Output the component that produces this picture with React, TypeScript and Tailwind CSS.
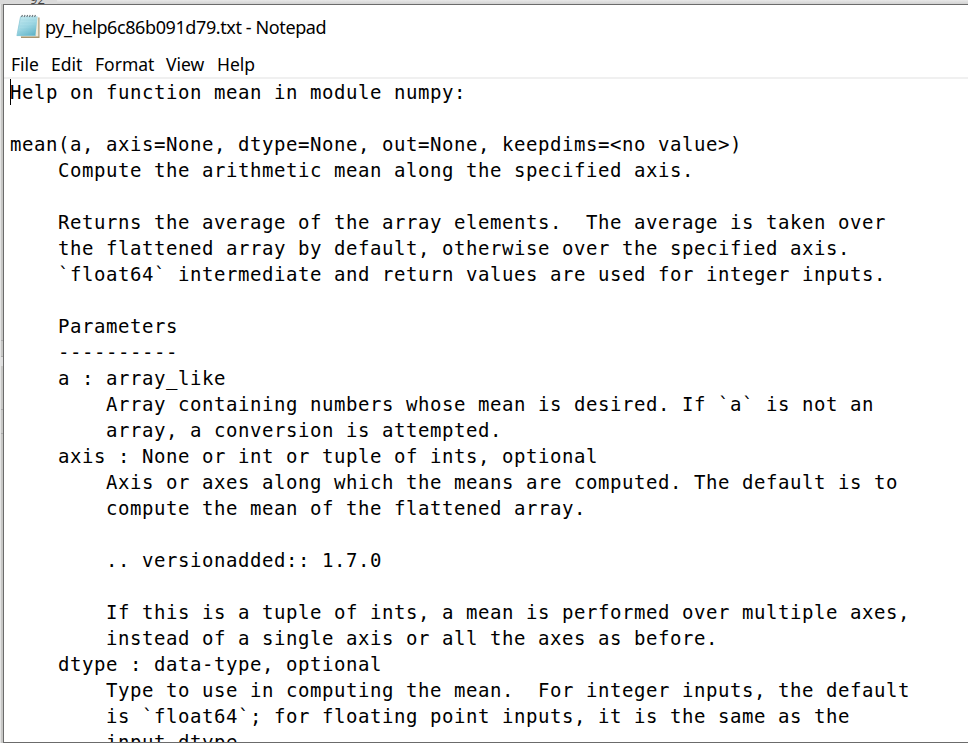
const lines = [
  'Help on function mean in module numpy:',
  '',
  'mean(a, axis=None, dtype=None, out=None, keepdims=<no value>)',
  '    Compute the arithmetic mean along the specified axis.',
  '',
  '    Returns the average of the array elements.  The average is taken over',
  '    the flattened array by default, otherwise over the specified axis.',
  '    `float64` intermediate and return values are used for integer inputs.',
  '',
  '    Parameters',
  '    ----------',
  '    a : array_like',
  '        Array containing numbers whose mean is desired. If `a` is not an',
  '        array, a conversion is attempted.',
  '    axis : None or int or tuple of ints, optional',
  '        Axis or axes along which the means are computed. The default is to',
  '        compute the mean of the flattened array.',
  '',
  '        .. versionadded:: 1.7.0',
  '',
  '        If this is a tuple of ints, a mean is performed over multiple axes,',
  '        instead of a single axis or all the axes as before.',
  '    dtype : data-type, optional',
  '        Type to use in computing the mean.  For integer inputs, the default',
  '        is `float64`; for floating point inputs, it is the same as the',
  '        input dtype.',
];

const menus = [
  { label: 'File', width: 'w-[40px]' },
  { label: 'Edit', width: 'w-[44px]' },
  { label: 'Format', width: 'w-[71px]' },
  { label: 'View', width: 'w-[51px]' },
  { label: 'Help', width: 'w-[50px]' },
];

function NotepadIcon() {
  return (
    <svg className="h-[26px] w-[26px] shrink-0" viewBox="0 0 26 26">
      <defs>
        <linearGradient id="page" x1="0.2" y1="0" x2="0.7" y2="1">
          <stop offset="0" stopColor="#c3e9f0" />
          <stop offset="0.5" stopColor="#a0d8e4" />
          <stop offset="1" stopColor="#62b4c8" />
        </linearGradient>
      </defs>
      <path d="M20.5 3.5h3v20.5H5v-2z" fill="#a8946f" />
      <path d="M20 3h2.4v19.6H4l1-1.6z" fill="#f2ead8" />
      <path d="M4.6 2.3h17L19.4 22H.8z" fill="url(#page)" />
      <path d="M4.6 2.5L.9 21.6h18.5" fill="none" stroke="#8cc8d7" strokeWidth=".8" />
      <path d="M5 6h15M4.4 9h15.3M3.8 12h15.5M3.2 15h15.8M2.6 18h16" stroke="#80c6d7" strokeWidth=".5" opacity=".4" />
      <path d="M5.5 2.9l1-2M8.1 2.9l1-2M10.7 2.9l1-2M13.3 2.9l1-2M15.9 2.9l1-2M18.5 2.9l1-2" stroke="#68777d" strokeWidth="1.2" />
    </svg>
  );
}

export default function App() {
  return (
    <div className="flex h-[743px] w-[968px] flex-col overflow-hidden bg-[#d0d0d0] text-black">
      <div className="flex h-1 shrink-0 bg-gradient-to-b from-[#e8e8e8] to-[#d2d2d2]">
        <div className="flex h-1 w-[57px] items-end overflow-hidden bg-[#dadada] pl-[30px] font-['Open_Sans',sans-serif] text-[13px] leading-[9px] text-[#444]">92</div>
      </div>
      <div className="flex min-h-0 flex-1">
        <div className="flex w-[3px] shrink-0 flex-col border-l border-[#e4e4e4] bg-[#c7c7c5]">
          <div className="h-[337px] border-b border-[#aaa]" />
          <div className="h-4 border-b border-[#aaa]" />
          <div className="h-[9px] bg-[#dedede]" />
          <div className="h-[44px] border-b border-[#aaa]" />
          <div className="h-6 border-b border-[#aaa]" />
        </div>
        <main className="flex min-w-0 flex-1 flex-col border-y border-l border-[#6b6b6b] bg-white">
          <header className="flex h-[46px] shrink-0 items-center pb-[3px] pl-3 font-['Noto_Sans','Open_Sans',sans-serif]">
            <NotepadIcon />
            <h1 className="ml-[3px] whitespace-pre text-[18px] leading-[26px] tracking-[-0.4px]">py_help6c86b091d79.txt - Notepad</h1>
          </header>
          <nav className="flex h-7 shrink-0 items-center border-b-2 border-[#f0f0f0] pl-[7px] font-['Noto_Sans','Open_Sans',sans-serif] text-[17.5px] leading-[26px]">
            {menus.map((menu) => (
              <div key={menu.label} className={`${menu.width} shrink-0 whitespace-nowrap`}>{menu.label}</div>
            ))}
          </nav>
          <div className="relative min-h-0 flex-1 overflow-hidden pl-[6px] font-['DejaVu_Sans_Mono',monospace] text-[19px] tracking-[0.56px]">
            <div className="absolute left-[6px] top-0 h-[26px] w-px bg-black" />
            {lines.map((line, index) => (
              <div key={index} className="h-[26px] whitespace-pre leading-[26px]">{line}</div>
            ))}
          </div>
        </main>
      </div>
    </div>
  );
}
